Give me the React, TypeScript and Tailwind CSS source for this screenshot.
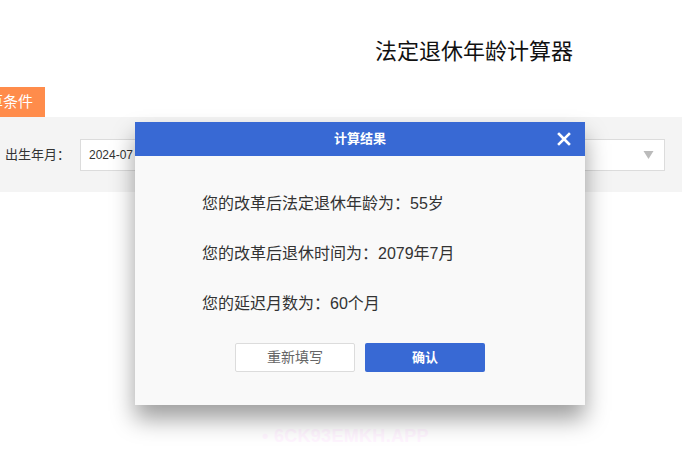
const cjk = { fontFamily: '"Liberation Sans", "Noto Sans CJK SC", sans-serif' };

function ResultModal() {
  const lines = [
    "您的改革后法定退休年龄为：55岁",
    "您的改革后退休时间为：2079年7月",
    "您的延迟月数为：60个月",
  ];

  return (
    <div className="absolute left-[135px] top-[122px] w-[450px] bg-[#f9f9f9] shadow-[0_14px_22px_rgba(0,0,0,0.38)]">
      {/* header */}
      <div className="relative flex h-[34px] items-center justify-center bg-[#3869d4]">
        <span className="text-[13px] font-semibold text-white">计算结果</span>
        <button className="absolute right-[14px] top-[10px] flex h-[14px] w-[14px] items-center justify-center">
          <svg viewBox="0 0 14 14" className="h-[14px] w-[14px]">
            <path d="M2 2 L12 12 M12 2 L2 12" stroke="#fff" strokeWidth="2.6" strokeLinecap="square" />
          </svg>
        </button>
      </div>

      {/* body */}
      <div className="flex flex-col gap-[28px] pl-[67px] pt-[37px] text-[16px] leading-[22px] text-[#333]">
        {lines.map((l) => (
          <p key={l}>{l}</p>
        ))}
      </div>

      <div className="flex justify-center gap-[10px] pb-[33px] pt-[28px]">
        <button className="h-[29px] w-[120px] rounded-[2px] border border-[#dcdcdc] bg-white text-[14px] text-[#666]">
          重新填写
        </button>
        <button className="h-[29px] w-[120px] rounded-[2px] bg-[#3869d4] text-[13px] font-semibold text-white">
          确认
        </button>
      </div>
    </div>
  );
}

export default function App() {
  return (
    <div className="relative h-[454px] w-full overflow-hidden bg-white" style={cjk}>
      <h1 className="pl-[375px] pt-[38px] text-[22px] leading-[28px] text-[#111]">法定退休年龄计算器</h1>

      {/* orange tab, scrolled off at left */}
      <div className="mt-[21px] h-[30px] w-[45px] overflow-hidden bg-[#ff8c4b]">
        <span className="ml-[-12px] block whitespace-nowrap text-[15px] leading-[30px] text-white">算条件</span>
      </div>

      {/* form band */}
      <div className="flex h-[75px] items-center bg-[#f4f4f4]">
        <span className="w-[80px] pl-[5px] text-[13px] text-[#333]">出生年月：</span>
        <div className="flex h-[32px] w-[230px] items-center border border-[#dcdcdc] bg-white px-[8px] text-[12px] text-[#333]">
          2024-07
        </div>
        <div className="ml-[110px] flex h-[32px] w-[245px] items-center justify-between border border-[#dcdcdc] bg-white pl-[6px] pr-[10px] text-[12px] text-[#333]">
          <span>请选择人员类型</span>
          <svg viewBox="0 0 10 8" className="h-[8px] w-[11px]">
            <path d="M0 0 H10 L5 8 Z" fill="#bbb" />
          </svg>
        </div>
      </div>

      <div
        className="absolute left-[262px] top-[423px] text-[18px] font-bold tracking-[0.3px] text-[#fff5ff]"
        style={{ fontFamily: '"Liberation Sans", sans-serif' }}
      >
        • 6CK93EMKH.APP
      </div>

      <ResultModal />
    </div>
  );
}
